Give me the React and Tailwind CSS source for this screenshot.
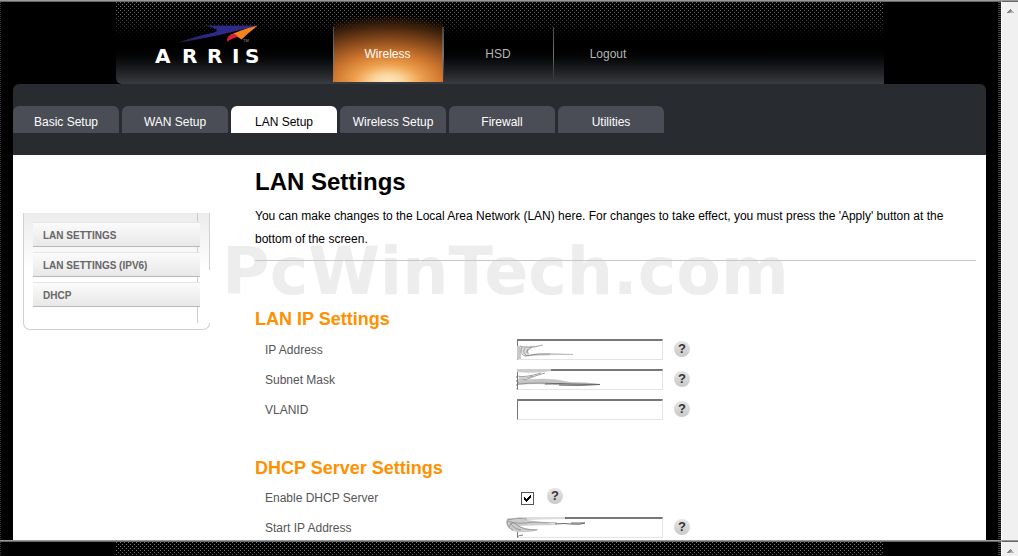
import { useState } from 'react';

const topLinks = ['Wireless', 'HSD', 'Logout'];

const tabs = ['Basic Setup', 'WAN Setup', 'LAN Setup', 'Wireless Setup', 'Firewall', 'Utilities'];

const sideLinks = ['LAN SETTINGS', 'LAN SETTINGS (IPV6)', 'DHCP'];

const Logo = () => (
  <a href="#home" aria-label="ARRIS home" className="block w-[110px]">
    <svg viewBox="0 0 110 50" className="block h-[50px] w-[110px]">
      <defs>
        <linearGradient id="wing" x1="0" x2="1">
          <stop offset="0" stopColor="#23234f" />
          <stop offset="0.4" stopColor="#2b2a86" />
          <stop offset="1" stopColor="#2e2b88" />
        </linearGradient>
      </defs>
      <path
        d="M50 3.500H104L80 9.500C66 13 50 16.500 24 20.700C36 16 48 12.800 60 10.500Q65 9 62 7Q58 5 50 3.500Z"
        fill="url(#wing)"
      />
      <path d="M104 3.500C94 5.500 84 9 76 13Q83 13.500 87.500 17.500Q95 10 104 3.500Z" fill="#f58220" />
      <path d="M80 11.500C74 13 72.500 16 73.500 20Q76 17 82 15.500L84 14Q81 12.500 80 11.500Z" fill="#d9203a" />
      <text x="89" y="20" fill="#999" fontSize="4" fontFamily="Liberation Sans, sans-serif">
        TM
      </text>
      <text
        x="1 28 53 78 91"
        y="41"
        fill="#fff"
        fontSize="20"
        fontWeight="bold"
        fontFamily="DejaVu Sans, sans-serif"
      >
        ARRIS
      </text>
    </svg>
  </a>
);

const DotPattern = ({ id }) => (
  <svg aria-hidden="true" className="pointer-events-none absolute inset-x-0 top-0 h-[36px] w-full">
    <defs>
      <pattern id={`${id}-dots`} width="4" height="4" patternUnits="userSpaceOnUse" shapeRendering="crispEdges">
        <rect x="0" y="0" width="1" height="1" fill="#73767b" />
        <rect x="2" y="2" width="1" height="1" fill="#73767b" />
      </pattern>
      <linearGradient id={`${id}-fade`} x2="0" y2="1">
        <stop offset="0.2" stopColor="#fff" />
        <stop offset="1" stopColor="#000" />
      </linearGradient>
      <mask id={`${id}-mask`}>
        <rect width="100%" height="100%" fill={`url(#${id}-fade)`} />
      </mask>
    </defs>
    <rect width="100%" height="100%" fill={`url(#${id}-dots)`} mask={`url(#${id}-mask)`} />
  </svg>
);

const Header = ({ id, children }) => (
  <header className="relative mx-auto h-[82px] w-full max-w-[768px] shrink-0 overflow-hidden rounded-bl-md bg-linear-to-b from-black from-50% to-[#393c41]">
    <DotPattern id={id} />
    {children}
  </header>
);

const Frame = ({ className, children }) => (
  <section className={`flex overflow-hidden border-t border-[#999b9b] bg-black ${className}`}>
    <div className="flex min-w-0 flex-1 border-t border-[#666]">
      <div className="w-px shrink-0 bg-[repeating-linear-gradient(#383838_0_1px,#000_1px_2px)]" />
      <div className="min-w-0 flex-1">{children}</div>
      <div className="w-[3px] shrink-0 bg-[repeating-linear-gradient(#444_0_1px,#000_1px_2px)]" />
    </div>
    <div className="w-[17px] shrink-0 border-t border-l border-t-[#666] border-l-white bg-[#f0f0f0] pt-[7px]">
      <svg viewBox="0 0 7 4" className="mx-auto block h-1 w-[7px]" shapeRendering="crispEdges">
        <path d="M3 0h1v1h1v1h1v1h1v1H0V3h1V2h1V1h1z" fill="#858585" />
        <path d="M4 2h2v1h1v1H3V3h1z" fill="#b5b5b5" />
      </svg>
    </div>
  </section>
);

const HelpButton = () => (
  <button
    type="button"
    aria-label="Help"
    className="flex size-4 items-center justify-center rounded-full bg-linear-to-b from-[#e6e6e6] to-[#c8c8c8] text-[13px] leading-4 font-bold text-[#333]"
  >
    ?
  </button>
);

const Row = ({ id, label, children }) => (
  <div className="flex h-[30px] items-center pl-[10px]">
    <label htmlFor={id} className="w-[252px] shrink-0 text-[#555]">
      {label}
    </label>
    {children}
  </div>
);

const TextRow = ({ id, label, smudge }) => (
  <Row id={id} label={label}>
    <div className="flex items-center gap-[11px] pb-[2px]">
      <div className="relative">
        <input
          id={id}
          type="text"
          className="block h-[21px] w-[146px] border border-t-2 border-t-[#777] border-r-[#e3e3e3] border-b-[#e3e3e3] border-l-[#777] bg-white px-1 outline-none"
        />
        {smudge}
      </div>
      <HelpButton />
    </div>
  </Row>
);

const smudgeClass = 'pointer-events-none absolute top-0 -left-3 h-[22px] w-[110px]';

const SmudgeOne = () => (
  <svg viewBox="0 0 110 22" fill="none" className={smudgeClass}>
    <path d="M12 7h4v13h-4z" fill="#c9c9c9" />
    <path d="M15 8Q24 6 36 7Q23 9 22 14Q22 17 28 15Q48 14 68 15Q42 17 20 17Q16 14 15 8Z" fill="#ddd" />
    <path d="M15 7Q22 10 38 6M17 8Q14 15 20 17M20 9Q17 13 21 16M23 10Q20 14 24 15M27 8Q21 11 23 14" stroke="#888" strokeWidth="0.7" />
    <path d="M20 17Q34 14 45 15" stroke="#777" strokeWidth="0.9" />
    <path d="M45 15L68 15.500" stroke="#aaa" strokeWidth="0.8" />
  </svg>
);

const SmudgeTwo = () => (
  <svg viewBox="0 0 110 22" fill="none" className={smudgeClass}>
    <path d="M12 0H46V2Q30 5 12 3Z" fill="#ccc" />
    <path d="M13 12Q40 7 65 13Q82 13 95 15Q75 18 50 16Q30 14 13 16Z" fill="#c4c4c4" />
    <path d="M12 7Q20 9 36 4M12 11Q22 12 30 7L40 4M14 9Q22 10 28 7" stroke="#888" strokeWidth="0.8" />
    <path d="M13 15Q36 13 54 15" stroke="#888" strokeWidth="0.8" />
    <path d="M40 15Q54 14 66 15L95 15.500Q75 17 54 16" stroke="#666" />
    <path d="M12 7v13" stroke="#777" strokeDasharray="2 2" />
  </svg>
);

const SmudgeThree = () => (
  <svg viewBox="0 0 110 22" fill="none" className={smudgeClass}>
    <path d="M12 0H60V2Q30 2 12 4Z" fill="#ddd" />
    <path d="M3 1Q-1 5 3 10Q6 14 12 15Q28 16 34 12Q22 13 14 9Q36 8 52 8Q20 2 3 1Z" fill="#ccc" />
    <path d="M2 3Q12 0 22 2M3 4Q12 8 28 5L52 6M4 10Q7 3 12 8Q18 13 32 13M5 6Q9 12 16 13M2 4Q2 11 8 13" stroke="#8a8a8a" strokeWidth="0.8" />
    <path d="M50 7Q60 6 66 7Q75 8 80 6Q74 6 66 6" stroke="#666" />
    <path d="M12 20Q14 18 18 18" stroke="#777" />
  </svg>
);

const SectionTitle = ({ children }) => (
  <h2 className="text-lg leading-6 font-bold text-[#ff9000]">{children}</h2>
);

const Sidebar = () => (
  <nav
    aria-label="LAN"
    className="relative w-[187px] bg-linear-to-b from-[#ececec] to-white to-[57px] pt-[9px] pr-[10px] pb-[23px] pl-[10px]"
  >
    <span className="absolute top-0 bottom-[7px] left-0 w-px bg-[#d0d0d0]" />
    <span className="absolute top-0 right-0 h-[57px] w-px bg-[#d0d0d0]" />
    <span className="absolute top-0 right-[12px] bottom-[7px] w-px bg-[#ccc]" />
    <span className="absolute inset-x-0 bottom-0 h-[7px] rounded-b-[7px] border border-t-0 border-[#d0d0d0]" />
    <ul className="relative flex flex-col gap-[5px]">
      {sideLinks.map((link) => (
        <li key={link}>
          <a
            href={`#${link}`}
            className="block h-[25px] border-t border-b border-t-[#e6e6e6] border-b-[#b8b8b8] bg-linear-to-b from-[#fbfbfb] to-[#e8e8e8] pl-[10px] text-[10px] leading-[25px] font-bold text-[#666]"
          >
            {link}
          </a>
        </li>
      ))}
    </ul>
  </nav>
);

const App = () => {
  const [activeTab, setActiveTab] = useState('LAN Setup');
  const [dhcpEnabled, setDhcpEnabled] = useState(true);

  return (
    <div className="flex h-screen flex-col overflow-hidden bg-black font-['Liberation_Sans',Arial,sans-serif] text-xs">
      <Frame className="min-h-0 flex-1">
        <Header id="main">
          <div className="relative flex h-20">
            <div className="w-[217px] shrink-0 pt-[20px] pl-[38px]">
              <Logo />
            </div>
            <nav aria-label="Main" className="flex">
              {topLinks.map((link, i) => (
                <a
                  key={link}
                  href={`#${link}`}
                  className={`flex w-[110px] pt-[25px] ${
                    i === 0
                      ? 'bg-[radial-gradient(ellipse_130px_68px_at_50%_100%,#ffe8c4_0%,#fbd49a_12%,#eda04e_26%,#cf772e_42%,#8a4b1c_62%,#42230d_82%,transparent_100%)] text-white'
                      : 'text-[#b4b4b4]'
                  }`}
                >
                  <span className="w-px bg-linear-to-b from-[#444] via-[#777] to-transparent" />
                  <span className="flex-1 pt-[19px] text-center leading-4">{link}</span>
                  {i === 0 && <span className="w-px bg-linear-to-b from-[#444] via-[#777] to-transparent" />}
                </a>
              ))}
            </nav>
          </div>
        </Header>

        <div className="mr-3 ml-3 overflow-hidden rounded-t-md bg-[#282b2f]">
          <nav aria-label="Setup" className="flex gap-[3px] pt-[22px] pb-[22px]">
            {tabs.map((tab) => (
              <button
                key={tab}
                type="button"
                onClick={() => setActiveTab(tab)}
                className={`h-[27px] w-[106px] rounded-t-md pt-1 ${
                  tab === activeTab ? 'bg-white text-black' : 'bg-[#4a4d55] text-white'
                }`}
              >
                {tab}
              </button>
            ))}
          </nav>

          <div className="flex items-start bg-white pr-[10px] pl-[10px]">
            <div className="mt-[58px] shrink-0">
              <Sidebar />
            </div>
            <main className="relative isolate ml-[45px] min-w-0 flex-1 pt-[11px] pb-10">
              <span
                aria-hidden="true"
                className="pointer-events-none absolute top-[79px] -left-[33px] -z-10 font-['DejaVu_Sans',sans-serif] text-[65px] leading-[75px] font-bold whitespace-nowrap text-[#ededed]"
              >
                PcWinTech.com
              </span>
              <h1 className="text-2xl leading-8 font-bold text-black">LAN Settings</h1>
              <p className="mt-[7px] leading-[23px] text-black">
                You can make changes to the Local Area Network (LAN) here. For changes to take effect, you must
                press the 'Apply' button at the bottom of the screen.
              </p>
              <hr className="mt-[9px] border-[#c8c8c8]" />

              <section className="mt-[46px]">
                <SectionTitle>LAN IP Settings</SectionTitle>
                <div className="mt-1">
                  <TextRow id="ip" label="IP Address" smudge={<SmudgeOne />} />
                  <TextRow id="subnet" label="Subnet Mask" smudge={<SmudgeTwo />} />
                  <TextRow id="vlan" label="VLANID" />
                </div>
              </section>

              <section className="mt-[31px]">
                <SectionTitle>DHCP Server Settings</SectionTitle>
                <div className="mt-[3px]">
                  <Row id="dhcp" label="Enable DHCP Server">
                    <div className="flex items-start gap-[13px] pb-1 pl-1">
                      <div className="relative mt-1 size-[13px]">
                        <input
                          id="dhcp"
                          type="checkbox"
                          checked={dhcpEnabled}
                          onChange={(e) => setDhcpEnabled(e.target.checked)}
                          className="peer block size-[13px] appearance-none border border-[#555] bg-white"
                        />
                        <svg
                          viewBox="0 0 13 13"
                          shapeRendering="crispEdges"
                          className="pointer-events-none absolute inset-0 hidden size-[13px] peer-checked:block"
                        >
                          <path
                            d="M3 5h1v1h1v1h1V6h1V5h1V4h1V3h1v3H9v1H8v1H7v1H6v1H5V9H4V8H3z"
                            fill="#000"
                          />
                        </svg>
                      </div>
                      <HelpButton />
                    </div>
                  </Row>
                  <TextRow id="start" label="Start IP Address" smudge={<SmudgeThree />} />
                </div>
              </section>
            </main>
          </div>
        </div>
      </Frame>

      <Frame className="h-4 shrink-0">
        <Header id="lower" />
      </Frame>
    </div>
  );
};

export default App;
